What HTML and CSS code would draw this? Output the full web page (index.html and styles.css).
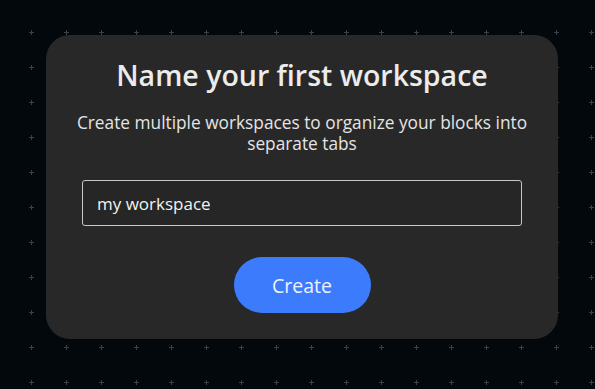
FILE: index.html
```html
<!DOCTYPE html>
<html lang="en">
<head>
<meta charset="utf-8">
<title>Name your first workspace</title>
<link rel="stylesheet" href="styles.css">
</head>
<body>
<svg class="grid-bg" aria-hidden="true">
  <defs>
    <pattern id="plus" x="14" y="15" width="35" height="35" patternUnits="userSpaceOnUse">
      <path d="M15 17.5h5M17.5 15v5" stroke="#3b4045" stroke-width="1" fill="none"/>
    </pattern>
  </defs>
  <rect width="100%" height="100%" fill="url(#plus)"/>
</svg>
<main class="page">
  <section class="card">
    <h1 class="title">Name your first workspace</h1>
    <p class="subtitle">Create multiple workspaces to organize your blocks into separate tabs</p>
    <input class="name-input" type="text" value="my workspace">
    <button class="create-btn" type="button">Create</button>
  </section>
</main>
</body>
</html>
```
FILE: styles.css
```css
html, body {
  margin: 0;
  padding: 0;
  height: 100%;
}
body {
  background: #03080c;
  font-family: "Open Sans", "Noto Sans", sans-serif;
  color: #ececec;
}
.grid-bg {
  position: fixed;
  inset: 0;
  width: 100%;
  height: 100%;
  z-index: 0;
}
.page {
  position: relative;
  z-index: 1;
  display: flex;
  padding: 35px 37px 0 46px;
}
.card {
  box-sizing: border-box;
  width: 512px;
  height: 304px;
  background: #282828;
  border-radius: 24px;
  padding: 0 30px;
  display: flex;
  flex-direction: column;
  align-items: center;
}
.title {
  margin: 22px 0 0;
  font-size: 28.5px;
  line-height: 36px;
  font-weight: 600;
  color: #ececec;
}
.subtitle {
  margin: 19px 0 0;
  font-size: 17.3px;
  line-height: 21px;
  text-align: center;
  color: #e4e4e4;
}
.name-input {
  box-sizing: border-box;
  margin-top: 26px;
  width: 440px;
  height: 46px;
  background: #262626;
  border: 1px solid #c8c8c8;
  border-radius: 3px;
  padding: 0 14px;
  font-family: inherit;
  font-size: 17px;
  color: #f2f2f2;
  outline: none;
}
.create-btn {
  margin-top: 31px;
  width: 137px;
  height: 56px;
  border: none;
  border-radius: 28px;
  background: #3d7bfd;
  color: #eef2ff;
  font-family: inherit;
  font-size: 19.5px;
  font-weight: 500;
}
```
